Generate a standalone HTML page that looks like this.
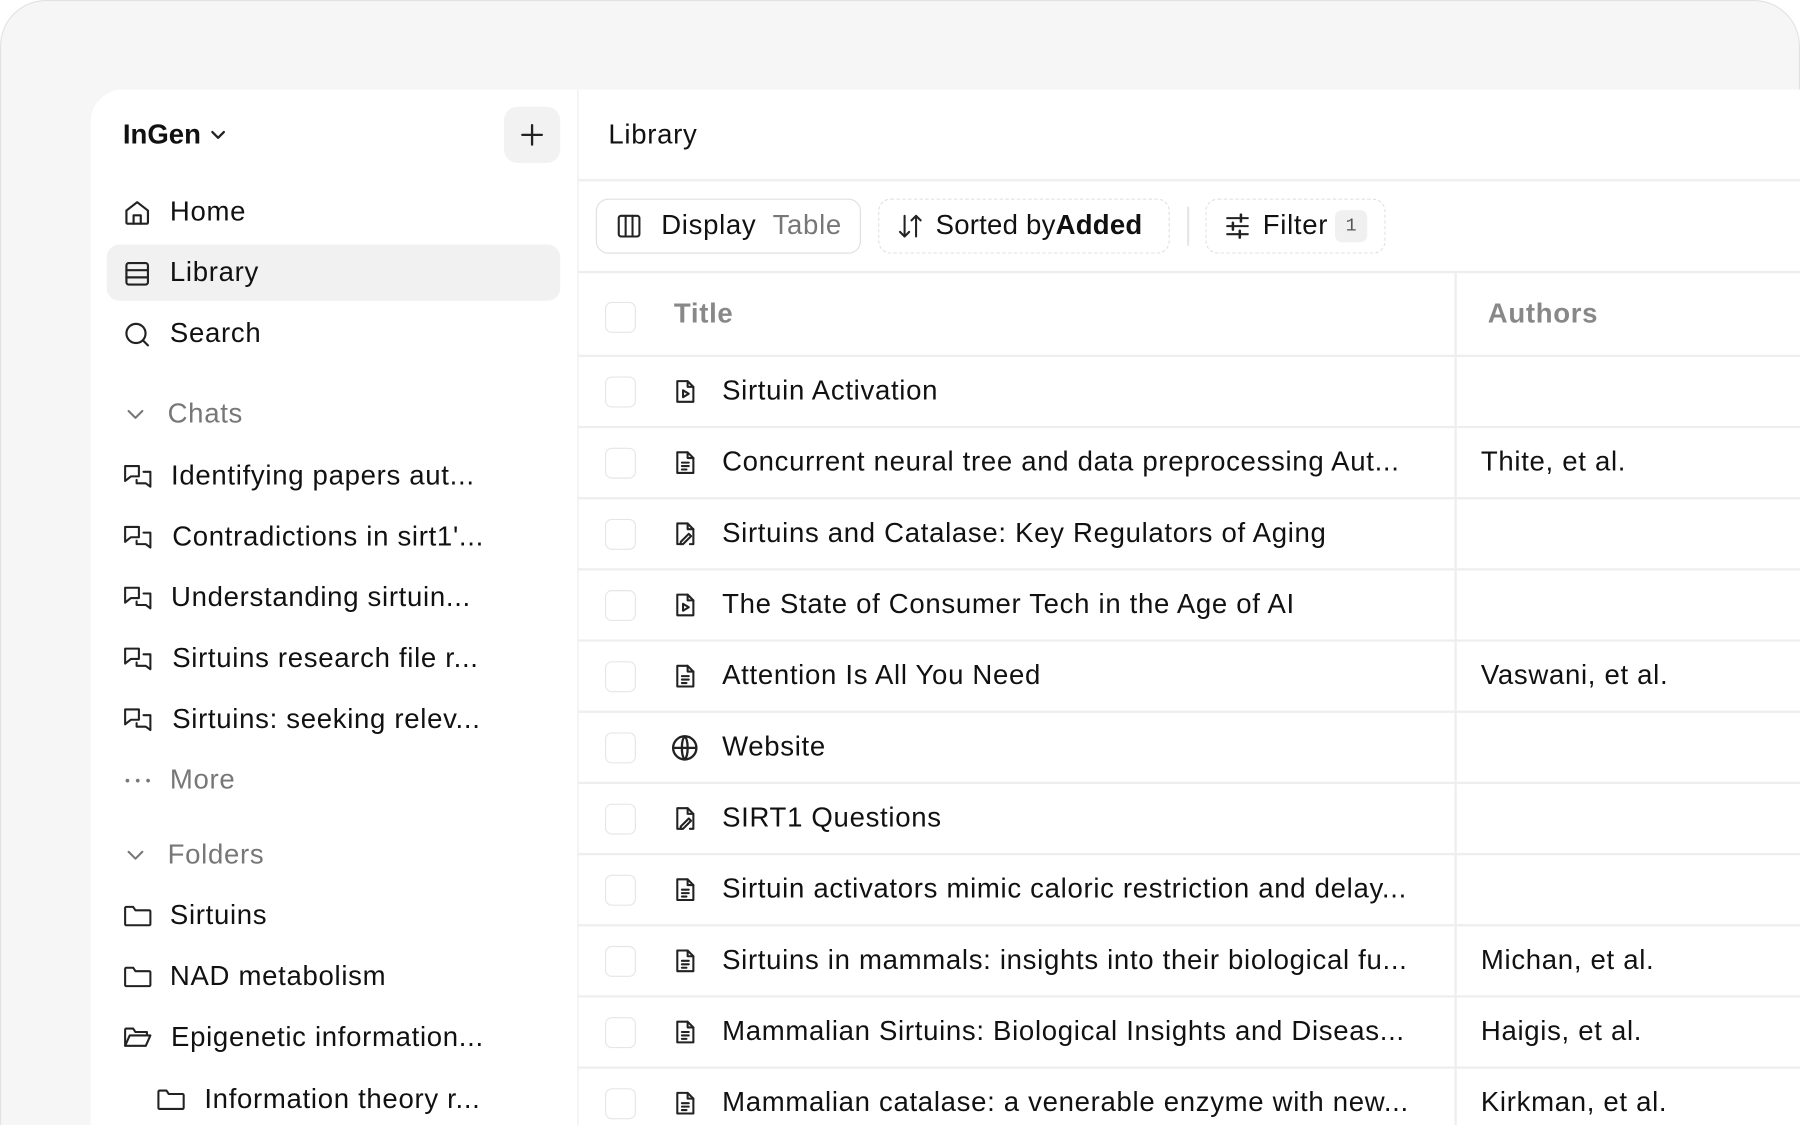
<!DOCTYPE html>
<html><head><meta charset="utf-8"><style>
*{box-sizing:border-box;margin:0;padding:0}
html,body{width:1800px;height:1125px;overflow:hidden;background:#fff;font-family:"Liberation Sans",sans-serif;color:#111}
#w{position:absolute;left:0;top:0;width:1568px;height:980px;overflow:hidden;transform:scale(1.147959);transform-origin:0 0}
.outer{position:absolute;left:0;top:0;width:1568px;height:980px;background:#f6f6f6;border:1.5px solid #e2e2e2;border-bottom:none;border-radius:40px 40px 0 0}
.card{position:absolute;left:79px;top:78px;width:1489px;height:902px;background:#fff;border-radius:28px 0 0 0}
.side{position:absolute;left:79px;top:78px;width:425px;height:902px;border-right:1.5px solid #ececec}
.a{position:absolute;white-space:nowrap;font-size:24px;line-height:28px;letter-spacing:0.6px}
.g{color:#777}
svg{position:absolute;fill:none;stroke:#222;stroke-width:1.8;stroke-linecap:round;stroke-linejoin:round}
.cb{position:absolute;left:527px;width:27px;height:27px;border:1.5px solid #e6e6e6;border-radius:6px}
.hl{position:absolute;height:1.5px;background:#eee;left:504px;width:1064px}
</style></head><body><div id="w">
<div class="outer"></div>
<div class="card"></div>
<div class="side"></div>

<div class="a" style="left:107px;top:104px;font-weight:bold;letter-spacing:0">InGen</div>
<svg style="left:182px;top:111px" width="16" height="14" viewBox="0 0 16 14"><path d="M3 4l5 5 5-5" stroke-width="2"/></svg>
<div style="position:absolute;left:439px;top:93px;width:49px;height:49px;background:#f2f2f2;border-radius:12px"></div>
<svg style="left:452px;top:106px" width="23" height="23" viewBox="0 0 23 23"><path d="M11.5 3v17M3 11.5h17" stroke-width="2"/></svg>

<svg style="left:107px;top:173px" width="25" height="25" viewBox="0 0 24 24"><path d="M3 10l9-7 9 7v10a1 1 0 0 1-1 1H4a1 1 0 0 1-1-1z"/><path d="M9 21v-7h6v7"/></svg>
<div class="a" style="left:148px;top:171px">Home</div>
<div style="position:absolute;left:93px;top:213px;width:395px;height:49px;background:#f1f1f1;border-radius:11px"></div>
<svg style="left:107px;top:226px" width="25" height="25" viewBox="0 0 24 24"><rect x="3" y="3" width="18" height="18" rx="2"/><path d="M3 9h18M3 15h18"/></svg>
<div class="a" style="left:148px;top:224px">Library</div>
<svg style="left:107px;top:279px" width="25" height="25" viewBox="0 0 24 24"><circle cx="11" cy="11" r="8"/><path d="M17 17l4 4"/></svg>
<div class="a" style="left:148px;top:277px">Search</div>

<svg style="left:109px;top:352px" width="18" height="18" viewBox="0 0 18 18"><path d="M3 6l6 6 6-6" stroke="#777"/></svg>
<div class="a g" style="left:146px;top:347px">Chats</div>

<svg style="left:106px;top:402px" width="28" height="28" viewBox="0 0 28 28"><path d="M3 4h12v9H8l-5 4z"/><path d="M19 9h6v13l-4-3h-8v-3"/></svg>
<div class="a" style="left:149px;top:401px">Identifying papers aut...</div>
<svg style="left:106px;top:455px" width="28" height="28" viewBox="0 0 28 28"><path d="M3 4h12v9H8l-5 4z"/><path d="M19 9h6v13l-4-3h-8v-3"/></svg>
<div class="a" style="left:150px;top:454px">Contradictions in sirt1'...</div>
<svg style="left:106px;top:508px" width="28" height="28" viewBox="0 0 28 28"><path d="M3 4h12v9H8l-5 4z"/><path d="M19 9h6v13l-4-3h-8v-3"/></svg>
<div class="a" style="left:149px;top:507px">Understanding sirtuin...</div>
<svg style="left:106px;top:561px" width="28" height="28" viewBox="0 0 28 28"><path d="M3 4h12v9H8l-5 4z"/><path d="M19 9h6v13l-4-3h-8v-3"/></svg>
<div class="a" style="left:150px;top:560px">Sirtuins research file r...</div>
<svg style="left:106px;top:614px" width="28" height="28" viewBox="0 0 28 28"><path d="M3 4h12v9H8l-5 4z"/><path d="M19 9h6v13l-4-3h-8v-3"/></svg>
<div class="a" style="left:150px;top:613px">Sirtuins: seeking relev...</div>
<svg style="left:107px;top:672px" width="26" height="16" viewBox="0 0 26 16"><circle cx="4" cy="8" r="1.6" fill="#777" stroke="none"/><circle cx="13" cy="8" r="1.6" fill="#777" stroke="none"/><circle cx="22" cy="8" r="1.6" fill="#777" stroke="none"/></svg>
<div class="a g" style="left:148px;top:666px">More</div>

<svg style="left:109px;top:736px" width="18" height="18" viewBox="0 0 18 18"><path d="M3 6l6 6 6-6" stroke="#777"/></svg>
<div class="a g" style="left:146px;top:731px">Folders</div>
<svg style="left:107px;top:786px" width="26" height="24" viewBox="0 0 26 24"><path d="M2 5a1 1 0 0 1 1-1h6l2 3h12a1 1 0 0 1 1 1v11a1 1 0 0 1-1 1H3a1 1 0 0 1-1-1z"/></svg>
<div class="a" style="left:148px;top:784px">Sirtuins</div>
<svg style="left:107px;top:839px" width="26" height="24" viewBox="0 0 26 24"><path d="M2 5a1 1 0 0 1 1-1h6l2 3h12a1 1 0 0 1 1 1v11a1 1 0 0 1-1 1H3a1 1 0 0 1-1-1z"/></svg>
<div class="a" style="left:148px;top:837px">NAD metabolism</div>
<svg style="left:107px;top:892px" width="26" height="24" viewBox="0 0 26 24"><path d="M2 19V5a1 1 0 0 1 1-1h6l2 3h10v3"/><path d="M2 19l4-9h18l-4 9z"/></svg>
<div class="a" style="left:149px;top:890px">Epigenetic information...</div>
<svg style="left:136px;top:946px" width="26" height="24" viewBox="0 0 26 24"><path d="M2 5a1 1 0 0 1 1-1h6l2 3h12a1 1 0 0 1 1 1v11a1 1 0 0 1-1 1H3a1 1 0 0 1-1-1z"/></svg>
<div class="a" style="left:178px;top:944px">Information theory r...</div>

<div class="a" style="left:530px;top:104px">Library</div>
<div class="hl" style="top:156px"></div>
<div style="position:absolute;left:519px;top:173px;width:231px;height:48px;border:1.5px solid #e0e0e0;border-radius:11px"></div>
<svg style="left:536px;top:185px" width="24" height="24" viewBox="0 0 24 24"><rect x="3" y="3" width="18" height="18" rx="2"/><path d="M9 3v18M15 3v18"/></svg>
<div class="a" style="left:576px;top:183px">Display</div>
<div class="a g" style="left:673px;top:183px">Table</div>
<div style="position:absolute;left:765px;top:173px;width:254px;height:48px;border:1.5px dashed #e0e0e0;border-radius:11px"></div>
<svg style="left:781px;top:185px" width="24" height="24" viewBox="0 0 24 24"><path d="M7 3v18M3 17l4 4 4-4M17 21V3M13 7l4-4 4 4"/></svg>
<div class="a" style="left:815px;top:183px;letter-spacing:0.2px">Sorted by<b>Added</b></div>
<div style="position:absolute;left:1034px;top:180px;width:1.5px;height:34px;background:#e6e6e6"></div>
<div style="position:absolute;left:1050px;top:173px;width:157px;height:48px;border:1.5px dashed #e0e0e0;border-radius:11px"></div>
<svg style="left:1066px;top:185px" width="24" height="24" viewBox="0 0 24 24"><path d="M3 5h18M3 12h18M3 19h18"/><path d="M15 2v6M8 9v6M14 16v6" stroke-width="2.2"/></svg>
<div class="a" style="left:1100px;top:183px">Filter</div>
<div style="position:absolute;left:1163px;top:183px;width:28px;height:28px;background:#f0f0f0;border-radius:6px;font-family:'Liberation Mono',monospace;font-size:16px;line-height:28px;text-align:center;color:#555">1</div>
<div class="hl" style="top:236px"></div>

<div style="position:absolute;left:1267px;top:237px;width:1.5px;height:743px;background:#eee"></div>
<div class="cb" style="top:263px"></div>
<div class="a g" style="left:587px;top:260px;font-weight:bold;color:#888">Title</div>
<div class="a g" style="left:1296px;top:260px;font-weight:bold;color:#888">Authors</div>
<div class="hl" style="top:309px"></div>
<div class="hl" style="top:371px"></div>
<div class="hl" style="top:433px"></div>
<div class="hl" style="top:495px"></div>
<div class="hl" style="top:557px"></div>
<div class="hl" style="top:619px"></div>
<div class="hl" style="top:681px"></div>
<div class="hl" style="top:743px"></div>
<div class="hl" style="top:805px"></div>
<div class="hl" style="top:867px"></div>
<div class="hl" style="top:929px"></div>

<div class="cb" style="top:328px"></div>
<svg style="left:585px;top:329px" width="24" height="24" viewBox="0 0 24 24"><path d="M5 3h9l5 5v13H5z"/><path d="M14 3v5h5"/><path d="M10 11v6l5-3z"/></svg>
<div class="a" style="left:629px;top:327px">Sirtuin Activation</div>

<div class="cb" style="top:390px"></div>
<svg style="left:585px;top:391px" width="24" height="24" viewBox="0 0 24 24"><path d="M5 3h9l5 5v13H5z"/><path d="M14 3v5h5M9 12h6M9 15h6M9 18h4"/></svg>
<div class="a" style="left:629px;top:389px">Concurrent neural tree and data preprocessing Aut...</div>
<div class="a" style="left:1290px;top:389px">Thite, et al.</div>

<div class="cb" style="top:452px"></div>
<svg style="left:585px;top:453px" width="24" height="24" viewBox="0 0 24 24"><path d="M9 21H5V3h9l5 5v13h-3"/><path d="M14 3v5h5"/><path d="M15 12l-7 7v2h2l7-7z"/></svg>
<div class="a" style="left:629px;top:451px">Sirtuins and Catalase: Key Regulators of Aging</div>

<div class="cb" style="top:514px"></div>
<svg style="left:585px;top:515px" width="24" height="24" viewBox="0 0 24 24"><path d="M5 3h9l5 5v13H5z"/><path d="M14 3v5h5"/><path d="M10 11v6l5-3z"/></svg>
<div class="a" style="left:629px;top:513px">The State of Consumer Tech in the Age of AI</div>

<div class="cb" style="top:576px"></div>
<svg style="left:585px;top:577px" width="24" height="24" viewBox="0 0 24 24"><path d="M5 3h9l5 5v13H5z"/><path d="M14 3v5h5M9 12h6M9 15h6M9 18h4"/></svg>
<div class="a" style="left:629px;top:575px">Attention Is All You Need</div>
<div class="a" style="left:1290px;top:575px">Vaswani, et al.</div>

<div class="cb" style="top:638px"></div>
<svg style="left:583px;top:638px" width="27" height="27" viewBox="0 0 24 24"><circle cx="12" cy="12" r="9"/><path d="M3 12h18M12 3c-3 3-3 15 0 18M12 3c3 3 3 15 0 18"/></svg>
<div class="a" style="left:629px;top:637px">Website</div>

<div class="cb" style="top:700px"></div>
<svg style="left:585px;top:701px" width="24" height="24" viewBox="0 0 24 24"><path d="M9 21H5V3h9l5 5v13h-3"/><path d="M14 3v5h5"/><path d="M15 12l-7 7v2h2l7-7z"/></svg>
<div class="a" style="left:629px;top:699px">SIRT1 Questions</div>

<div class="cb" style="top:762px"></div>
<svg style="left:585px;top:763px" width="24" height="24" viewBox="0 0 24 24"><path d="M5 3h9l5 5v13H5z"/><path d="M14 3v5h5M9 12h6M9 15h6M9 18h4"/></svg>
<div class="a" style="left:629px;top:761px">Sirtuin activators mimic caloric restriction and delay...</div>

<div class="cb" style="top:824px"></div>
<svg style="left:585px;top:825px" width="24" height="24" viewBox="0 0 24 24"><path d="M5 3h9l5 5v13H5z"/><path d="M14 3v5h5M9 12h6M9 15h6M9 18h4"/></svg>
<div class="a" style="left:629px;top:823px">Sirtuins in mammals: insights into their biological fu...</div>
<div class="a" style="left:1290px;top:823px">Michan, et al.</div>

<div class="cb" style="top:886px"></div>
<svg style="left:585px;top:887px" width="24" height="24" viewBox="0 0 24 24"><path d="M5 3h9l5 5v13H5z"/><path d="M14 3v5h5M9 12h6M9 15h6M9 18h4"/></svg>
<div class="a" style="left:629px;top:885px">Mammalian Sirtuins: Biological Insights and Diseas...</div>
<div class="a" style="left:1290px;top:885px">Haigis, et al.</div>

<div class="cb" style="top:948px"></div>
<svg style="left:585px;top:949px" width="24" height="24" viewBox="0 0 24 24"><path d="M5 3h9l5 5v13H5z"/><path d="M14 3v5h5M9 12h6M9 15h6M9 18h4"/></svg>
<div class="a" style="left:629px;top:947px">Mammalian catalase: a venerable enzyme with new...</div>
<div class="a" style="left:1290px;top:947px">Kirkman, et al.</div>
</div></body></html>
